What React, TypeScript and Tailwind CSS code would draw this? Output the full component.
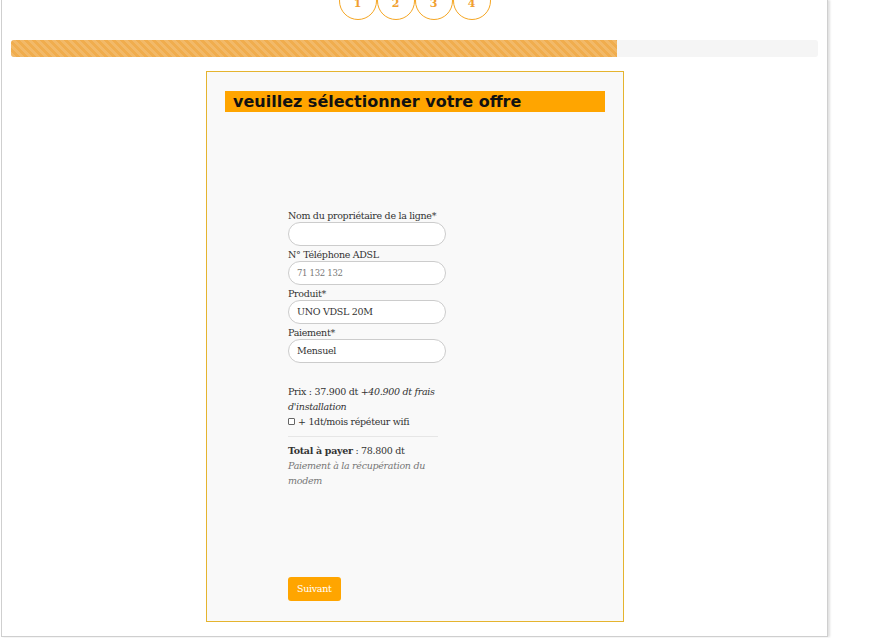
import React from 'react'

const slab = { fontFamily: '"DejaVu Serif", "Liberation Serif", serif' }

export default function App() {
  const steps = ['1', '2', '3', '4']

  return (
    <div className="w-[875px] h-[638px] bg-white overflow-hidden" style={slab}>
      <div className="ml-[1px] w-[827px] h-[637px] flex flex-col border-l border-r border-b border-[#cfcfcf] shadow-[2px_0_2px_rgba(0,0,0,0.12)] bg-white">
        {/* Steps */}
        <div className="flex justify-center -mt-[18px]">
          <div className="flex">
            {steps.map((s) => (
              <div
                key={s}
                className="w-[38px] h-[38px] rounded-full border border-[#f5a623] flex items-end justify-center pb-[7px] text-[11px] font-bold text-[#f0a030]"
              >
                {s}
              </div>
            ))}
          </div>
        </div>

        {/* Progress */}
        <div className="mx-[9px] mt-[20px] h-[17px] bg-[#f5f5f5] rounded-[3px] overflow-hidden">
          <div className="h-full w-[606px] bg-[#f0ad4e] bg-[linear-gradient(45deg,rgba(255,255,255,0.15)_25%,transparent_25%,transparent_50%,rgba(255,255,255,0.15)_50%,rgba(255,255,255,0.15)_75%,transparent_75%,transparent)] bg-[length:8px_8px]" />
        </div>

        {/* Card */}
        <div className="ml-[204px] mt-[14px] w-[418px] h-[551px] border border-[#e5b42f] bg-[#f9f9f9] px-[18px] pt-[19px]">
          <div className="h-[21px] bg-[#ffa500] pl-[8px] flex items-center">
            <h1
              className="text-[16px] font-bold text-[#111] leading-none"
              style={{ fontFamily: '"DejaVu Sans", Inter, sans-serif' }}
            >
              veuillez sélectionner votre offre
            </h1>
          </div>

          <div className="ml-[63px] mt-[97px] w-[160px] text-[9.5px] tracking-[-0.3px] text-[#333]">
            <label className="block leading-[13px] whitespace-nowrap">Nom du propriétaire de la ligne*</label>
            <div className="h-[24px] rounded-full border border-[#cccccc] bg-white w-[158px]" />

            <label className="block leading-[13px] mt-[2px]">N° Téléphone ADSL</label>
            <div className="h-[24px] w-[158px] rounded-full border border-[#cccccc] bg-white px-[8px] flex items-center text-[8.5px] text-[#777]">
              71 132 132
            </div>

            <label className="block leading-[13px] mt-[2px]">Produit*</label>
            <div className="h-[24px] w-[158px] rounded-full border border-[#cccccc] bg-white px-[8px] flex items-center text-[#333]">
              UNO VDSL 20M
            </div>

            <label className="block leading-[13px] mt-[2px]">Paiement*</label>
            <div className="h-[24px] w-[158px] rounded-full border border-[#cccccc] bg-white px-[8px] flex items-center text-[#333]">
              Mensuel
            </div>

            <p className="mt-[21px] leading-[15px]">
              Prix : 37.900 dt <i>+40.900 dt frais d'installation</i>
            </p>
            <div className="flex items-center gap-[3px] leading-[15px]">
              <span className="inline-block w-[7px] h-[7px] border border-[#666] rounded-[1px] bg-white" />
              <span>+ 1dt/mois répéteur wifi</span>
            </div>
            <div className="mt-[7px] border-t border-[#e6e6e6] w-[150px]" />
            <p className="mt-[6px] leading-[15px]">
              <b>Total à payer</b> : 78.800 dt
            </p>
            <p className="leading-[15px] italic text-[#777]">Paiement à la récupération du modem</p>

            <button className="mt-[89px] h-[24px] px-[9px] rounded-[3px] bg-[#ffa500] text-white text-[9.5px]">
              Suivant
            </button>
          </div>
        </div>
      </div>
    </div>
  )
}
